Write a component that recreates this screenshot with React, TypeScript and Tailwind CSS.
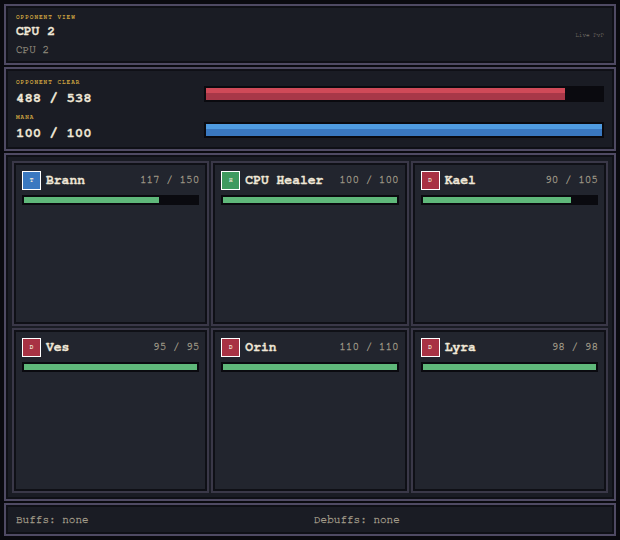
const heroes = [
  { name: 'Brann', role: 'T', hp: 117, max: 150, icon: 'bg-[#3a78c0]' },
  { name: 'CPU Healer', role: 'H', hp: 100, max: 100, icon: 'bg-[#3f9a5f]' },
  { name: 'Kael', role: 'D', hp: 90, max: 105, icon: 'bg-[#a83244]' },
  { name: 'Ves', role: 'D', hp: 95, max: 95, icon: 'bg-[#a83244]' },
  { name: 'Orin', role: 'D', hp: 110, max: 110, icon: 'bg-[#a83244]' },
  { name: 'Lyra', role: 'D', hp: 98, max: 98, icon: 'bg-[#a83244]' },
]

const panel = 'border-2 border-[#4f4a63] bg-[#1a1c24] shadow-[inset_0_0_0_2px_#0f1016]'
const label = 'text-[6px] leading-[8px] tracking-[1px] text-[#c9a040] font-bold [-webkit-text-stroke:0]'

function Bar({ percent, top, bottom }: { percent: number; top: string; bottom: string }) {
  return (
    <div className="h-4 w-full border-2 border-[#0a0a0f] bg-[#0a0a0f]">
      <div className="flex h-full flex-col" style={{ width: `${percent}%` }}>
        <div className={`h-[5px] ${top}`} />
        <div className={`flex-1 ${bottom}`} />
      </div>
    </div>
  )
}

export default function App() {
  return (
    <div className="flex h-[540px] w-[620px] flex-col gap-[2px] bg-[#0a0a0f] p-1 font-['FreeMono',monospace] [-webkit-text-stroke:0.3px_currentColor]">
      {/* Header */}
      <div className={`${panel} flex h-[61px] items-center justify-between px-[10px]`}>
        <div className="mt-[2px]">
          <div className={label}>OPPONENT VIEW</div>
          <div className="mt-[2px] text-[13px] leading-[18px] font-bold text-[#f0e8d8]">CPU 2</div>
          <div className="mt-[1px] text-[11px] leading-[16px] text-[#8a8578]">CPU 2</div>
        </div>
        <div className="mt-[2px] text-[6px] text-[#a09a88] [-webkit-text-stroke:0]">Live PvP</div>
      </div>

      {/* Resources */}
      <div className={`${panel} flex h-[84px] flex-col justify-center gap-[5px] px-[10px] pt-[2px]`}>
        <div className="flex items-center">
          <div className="w-[188px]">
            <div className={label}>OPPONENT CLEAR</div>
            <div className="mt-[2px] text-[14px] leading-[20px] text-[#f0e8d8] font-bold">488 / 538</div>
          </div>
          <div className="mt-[2px] flex-1">
            <Bar percent={90.7} top="bg-[#d04a58]" bottom="bg-[#a83848]" />
          </div>
        </div>
        <div className="flex items-center">
          <div className="w-[188px]">
            <div className={label}>MANA</div>
            <div className="mt-[2px] text-[14px] leading-[20px] text-[#f0e8d8] font-bold">100 / 100</div>
          </div>
          <div className="mt-[4px] flex-1">
            <Bar percent={100} top="bg-[#4f9be0]" bottom="bg-[#3a78c0]" />
          </div>
        </div>
      </div>

      {/* Party */}
      <div className={`${panel} grid flex-1 grid-cols-3 grid-rows-2 gap-[2px] p-[6px]`}>
        {heroes.map((h) => (
          <div key={h.name} className="border-2 border-[#3a3848] bg-[#22252e] p-[8px] shadow-[inset_0_0_0_2px_#0f1016]">
            <div className="flex h-[19px] items-center gap-[5px]">
              <div className={`flex h-[19px] w-[19px] items-center justify-center border border-white text-[6px] font-bold text-[#f0e8d8] [-webkit-text-stroke:0] ${h.icon}`}>
                {h.role}
              </div>
              <span className="pt-[1px] text-[13px] font-bold text-[#f0e8d8]">{h.name}</span>
              <span className="ml-auto text-[11px] text-[#a09a88]">
                {h.hp} / {h.max}
              </span>
            </div>
            <div className="mt-[5px] h-[10px] border-2 border-[#0a0a0f] bg-[#0a0a0f]">
              <div className="h-full bg-[#5fb87a]" style={{ width: `${(h.hp / h.max) * 100}%` }} />
            </div>
          </div>
        ))}
      </div>

      {/* Status */}
      <div className={`${panel} flex h-[33px] items-center px-[10px] pt-[1px] text-[11px] text-[#a09a88]`}>
        <div className="w-[298px]">Buffs: none</div>
        <div>Debuffs: none</div>
      </div>
    </div>
  )
}
